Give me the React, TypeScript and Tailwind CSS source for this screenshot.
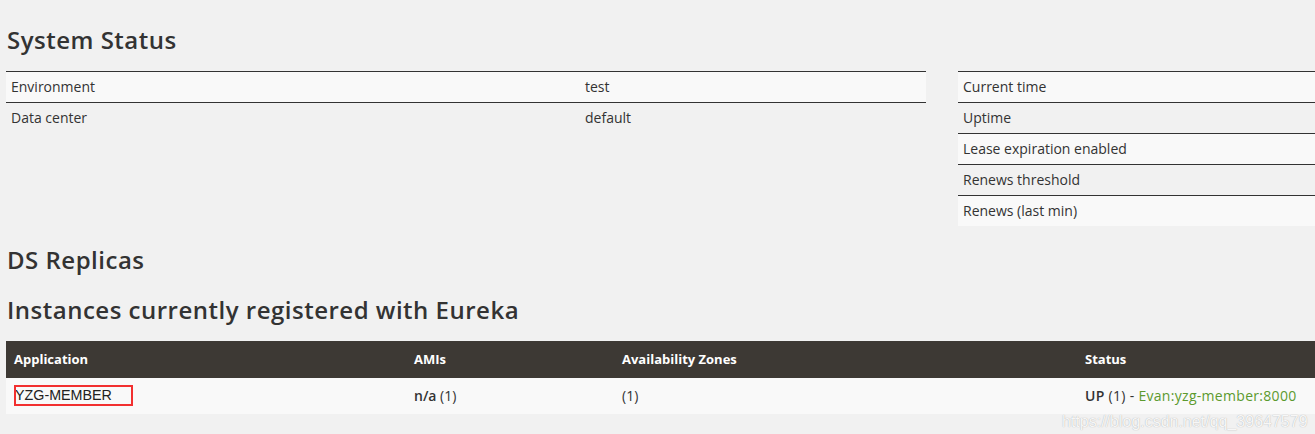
const body = "font-['Open_Sans',sans-serif]"
const heading = 'pl-[1px] text-[24px] font-semibold leading-[24px] tracking-[0.5px] text-[#333]'

function KvRow({ label, value, shaded }: { label: string; value?: string; shaded?: boolean }) {
  return (
    <div className={`flex h-[31px] items-center border-t border-[#333] pb-[2px] text-[14px] text-[#333] ${shaded ? 'bg-[#f9f9f9]' : ''}`}>
      <div className="w-[574px] shrink-0 pl-[5px]">{label}</div>
      {value !== undefined && <div className="pl-[5px]">{value}</div>}
    </div>
  )
}

export default function App() {
  return (
    <div className={`relative min-h-screen overflow-hidden bg-[#f1f1f1] pl-[6px] ${body}`}>
      <h2 className={`pt-[28px] ${heading}`}>System Status</h2>

      <div className="mt-[19px] flex gap-[32px]">
        <div className="w-[920px] shrink-0">
          <KvRow label="Environment" value="test" shaded />
          <KvRow label="Data center" value="default" />
        </div>
        <div className="min-w-0 flex-1">
          <KvRow label="Current time" shaded />
          <KvRow label="Uptime" />
          <KvRow label="Lease expiration enabled" shaded />
          <KvRow label="Renews threshold" />
          <KvRow label="Renews (last min)" shaded />
        </div>
      </div>

      <h2 className={`mt-[22px] ${heading}`}>DS Replicas</h2>
      <h2 className={`mt-[26px] ${heading}`}>Instances currently registered with Eureka</h2>

      <div className="mt-[19px]">
        <div className="flex h-[37px] items-center bg-[#3d3934] text-[13px] font-bold text-white">
          <div className="w-[400px] shrink-0 pl-[8px]">Application</div>
          <div className="w-[208px] shrink-0 pl-[8px]">AMIs</div>
          <div className="w-[463px] shrink-0 pl-[8px]">Availability Zones</div>
          <div className="pl-[8px]">Status</div>
        </div>
        <div className="flex h-[36px] items-center bg-[#f9f9f9] pb-[2px] text-[14px] text-[#333]">
          <div className="relative w-[400px] shrink-0 pl-[9px]">
            <span className="font-['Liberation_Sans',sans-serif] text-[14.3px] text-[#222]">YZG-MEMBER</span>
            <div className="absolute left-[8px] top-[1px] h-[21px] w-[119px] border-2 border-[#f23030]" />
          </div>
          <div className="w-[208px] shrink-0 pl-[8px]">
            <b className="font-semibold">n/a</b> (1)
          </div>
          <div className="w-[463px] shrink-0 pl-[8px]">(1)</div>
          <div className="whitespace-nowrap pl-[8px] tracking-[0.3px]">
            <b className="font-semibold">UP</b> (1) - <span className="text-[#5c9a2e]">Evan:yzg-member:8000</span>
          </div>
        </div>
      </div>

      <div className="absolute left-[1062px] top-[410px] font-['Liberation_Sans',sans-serif] text-[16px] text-white/90 [text-shadow:0_0_1px_rgba(0,0,0,0.35)]">
        https://blog.csdn.net/qq_39647579
      </div>
    </div>
  )
}
